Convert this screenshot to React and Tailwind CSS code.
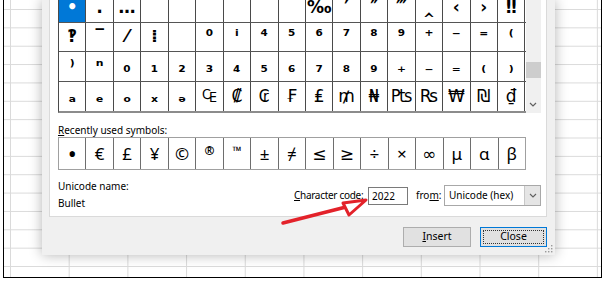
const rows = [
  ["•", "․", "…", "", "", "", "", "", "", "‰", "′", "″", "‴", "‸", "‹", "›", "‼"],
  ["‽", "‾", "⁄", "⁞", "", "⁰", "ⁱ", "⁴", "⁵", "⁶", "⁷", "⁸", "⁹", "⁺", "⁻", "⁼", "⁽"],
  ["⁾", "ⁿ", "₀", "₁", "₂", "₃", "₄", "₅", "₆", "₇", "₈", "₉", "₊", "₋", "₌", "₍", "₎"],
  ["ₐ", "ₑ", "ₒ", "ₓ", "ₔ", "₠", "₡", "₢", "₣", "₤", "₥", "₦", "₧", "₨", "₩", "₪", "₫"],
];

const recent = ["•", "€", "£", "¥", "©", "®", "™", "±", "≠", "≤", "≥", "÷", "×", "∞", "μ", "α", "β"];

const SymbolGrid = () => (
  <div className="flex -mt-[7px]">
    <div className="w-[467.5px] border-l border-[#4a4a4a] border-b-2 border-b-[#8c8c8c] font-['DejaVu_Sans',sans-serif] text-[17px] leading-none">
      {rows.map((row, r) => (
        <div key={r} className={`flex h-[29.5px] ${r < 3 ? "border-b border-[#555]" : ""}`}>
          {row.map((ch, c) => (
            <div
              key={c}
              className={`flex-1 flex items-center justify-center border-r border-[#4a4a4a] ${
                r === 0 && c === 0 ? "bg-[#0078d7] text-white" : ""
              } ${r < 3 || c < 5 ? "font-bold" : ""}`}
            >
              {ch}
            </div>
          ))}
        </div>
      ))}
    </div>
    <div className="w-[15px] bg-[#f0f0f0] flex flex-col items-center">
      <div className="mt-[69px] w-[15px] h-[16px] bg-[#cdcdcd]" />
      <div className="flex-1" />
      <svg className="mb-[6px]" width="8" height="5" viewBox="0 0 8 5">
        <path d="M1 1l3 3 3-3" fill="none" stroke="#606060" strokeWidth="1.2" />
      </svg>
    </div>
  </div>
);

const RecentRow = () => (
  <div className="flex w-[468px] h-[33px] border border-[#a0a0a0] font-['Noto_Sans','DejaVu_Sans',sans-serif] text-[17px] leading-none">
    {recent.map((ch, i) => {
      let extra = "items-center";
      if (ch === "®" || ch === "™") extra = "items-start pt-[7px] text-[12px] font-bold";
      if (ch === "•") extra = "items-center text-[24px]";
      return (
        <div
          key={i}
          className={`flex-1 flex justify-center ${
            i < recent.length - 1 ? "border-r border-[#6e6e6e]" : ""
          } ${extra}`}
        >
          {ch}
        </div>
      );
    })}
  </div>
);

const Dialog = () => (
  <div className="relative w-[513px] h-[255px] bg-[#f0f0f0] shadow-[0_0_12px_rgba(0,0,0,0.3)]">
    <div className="ml-[7px] w-[498px] h-[217px] flex flex-col bg-white border-x border-b border-[#dadada] pl-[8px]">
      <SymbolGrid />
      <div className="mt-[10px] h-[14px] text-[10px] leading-[14px]">
        <span className="underline">R</span>ecently used symbols:
      </div>
      <RecentRow />
      <div className="flex">
        <div className="w-[236px] shrink-0 text-[10px] leading-[14px]">
          <div className="mt-[9px]">Unicode name:</div>
          <div className="mt-[3px]">Bullet</div>
        </div>
        <div className="flex items-center mt-[15px] h-[21px] text-[10px]">
          <span className="w-[74px] whitespace-nowrap tracking-[-0.3px]">
            <span className="underline">C</span>haracter code:
          </span>
          <div className="w-[40px] h-[18px] border border-[#7a7a7a] bg-white pl-[3px] leading-[16px]">2022</div>
          <span className="ml-[8px] w-[28px] whitespace-nowrap">
            fro<span className="underline">m</span>:
          </span>
          <div className="w-[97px] h-[21px] border border-[#a8a8a8] bg-white flex items-center">
            <span className="pl-[4px] flex-1 whitespace-nowrap">Unicode (hex)</span>
            <div className="w-[16px] h-[19px] bg-[#e5e5e5] border-l border-[#c8c8c8] flex items-center justify-center">
              <svg width="8" height="5" viewBox="0 0 8 5">
                <path d="M1 1l3 3 3-3" fill="none" stroke="#606060" strokeWidth="1.1" />
              </svg>
            </div>
          </div>
        </div>
      </div>
    </div>
    <div className="mt-[10px] flex justify-end gap-[9px] pr-[8px] text-[10.5px]">
      <button className="w-[68px] h-[20px] bg-[#e1e1e1] border border-[#adadad] flex items-center justify-center">
        <span>
          <span className="underline">I</span>nsert
        </span>
      </button>
      <button className="w-[67px] h-[20px] bg-[#e1e1e1] border border-[#0078d7] p-[2px]">
        <div className="w-full h-full border border-dotted border-[#333] flex items-center justify-center">
          Close
        </div>
      </button>
    </div>
    <svg className="absolute right-[2px] bottom-[2px]" width="9" height="9" viewBox="0 0 9 9">
      <g fill="#9a9a9a">
        <rect x="7" y="1" width="1.4" height="1.4" />
        <rect x="4" y="4" width="1.4" height="1.4" />
        <rect x="7" y="4" width="1.4" height="1.4" />
        <rect x="1" y="7" width="1.4" height="1.4" />
        <rect x="4" y="7" width="1.4" height="1.4" />
        <rect x="7" y="7" width="1.4" height="1.4" />
      </g>
    </svg>
  </div>
);

export default function App() {
  return (
    <div className="relative w-[607px] h-[284px] bg-white overflow-hidden text-black font-['Noto_Sans',sans-serif]">
      <div className="ml-[3px] w-[599px] h-[278px] border-x border-b border-black bg-white bg-[linear-gradient(to_right,#dadada_1px,transparent_1px),linear-gradient(to_bottom,#dadada_1px,transparent_1px)] bg-size-[58.7px_18.36px] bg-position-[6px_9px] pl-[38px] flex flex-col">
        <Dialog />
      </div>
      <svg className="absolute inset-0 pointer-events-none" width="607" height="284" viewBox="0 0 607 284">
        <path d="M283 223 L346 207" stroke="#e3222a" strokeWidth="3.5" strokeLinecap="round" />
        <polygon points="366,200 343,203 349,215" fill="#fff" stroke="#e3222a" strokeWidth="3" strokeLinejoin="round" />
      </svg>
    </div>
  );
}
